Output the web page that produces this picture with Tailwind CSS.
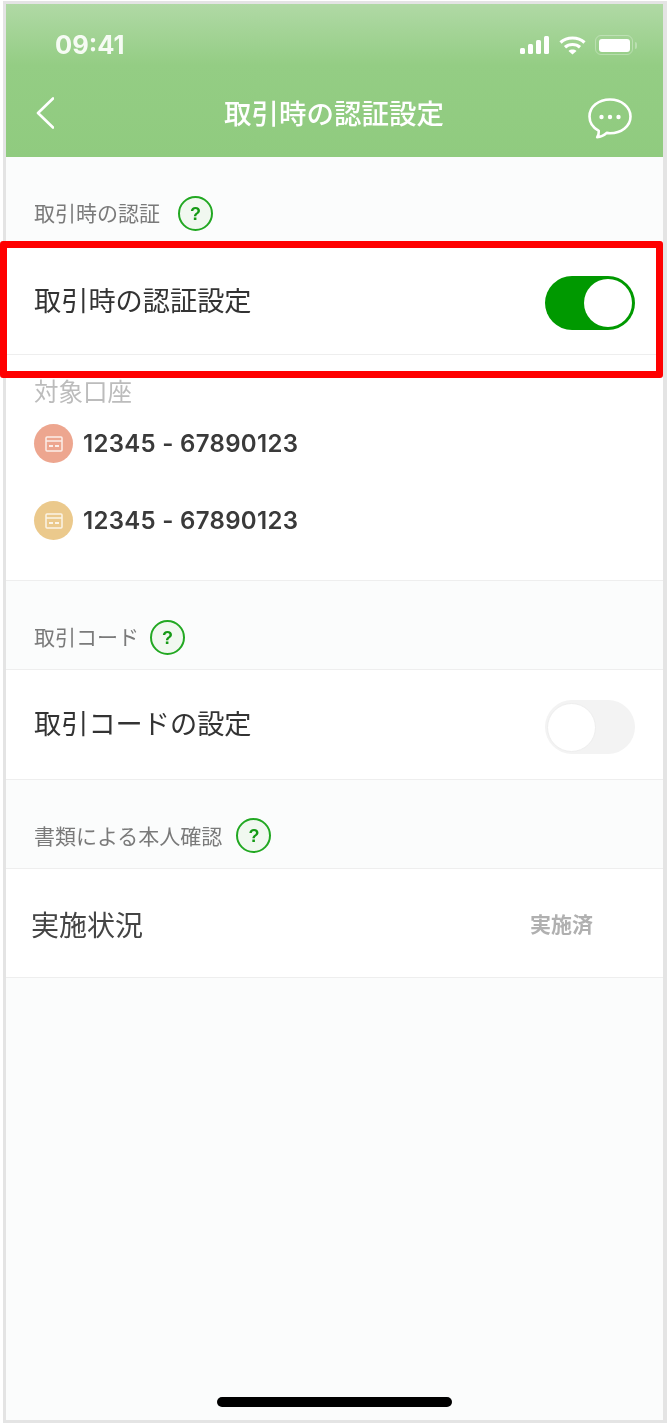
<!DOCTYPE html>
<html lang="ja">
<head>
  <meta charset="UTF-8">
  <meta name="viewport" content="width=device-width, initial-scale=1.0">
  <title>取引時の認証設定</title>
  <script src="https://cdn.jsdelivr.net/npm/@tailwindcss/browser@4"></script>
</head>
<body class="bg-white font-['Noto_Sans_CJK_JP','Noto_Sans',sans-serif]">
  <div class="relative w-[667px] h-[1424px] overflow-hidden">
    <!-- phone frame -->
    <div class="ml-[3px] mt-[1px] w-[664px] h-[1422px] border-[3px] border-r-[4px] border-[#e4e4e4] bg-[#fbfcfc] flex flex-col blur-[0.4px]">

      <!-- status bar + nav -->
      <header class="h-[153px] shrink-0 bg-gradient-to-b from-[#b0d9a5] via-[#94cd84] via-40% to-[#90cb7f] text-white">
        <div class="h-[63px] flex items-end pl-[49px] pr-[26px] pb-[5px] justify-between">
          <span class="font-['Inter',sans-serif] text-[25.500px] leading-[34px] font-bold text-[#f6fbf4]">09:41</span>
          <div class="flex items-center gap-[9px] h-[34px]">
            <svg width="30" height="18" viewBox="0 0 30 18" fill="#fff"><rect x="0" y="12" width="5" height="6" rx="1.5"/><rect x="8" y="8" width="5" height="10" rx="1.5"/><rect x="16" y="4" width="5" height="14" rx="1.5"/><rect x="24" y="0" width="5" height="18" rx="1.5"/></svg>
            <svg width="27" height="19" viewBox="0 0 27 19" fill="none" stroke="#fff" stroke-width="3.2"><path d="M1.5 6.5C8 .5 19 .5 25.5 6.5"/><path d="M6 11.2c4-3.6 11-3.6 15 0"/><path d="M13.5 18.5l-4-3.6c2.2-1.8 5.8-1.8 8 0z" fill="#fff" stroke="none"/></svg>
            <div class="flex items-center gap-[2px]">
              <div class="w-[38px] h-[20px] rounded-[6px] border-[1.5px] border-white/30 p-[2.5px]">
                <div class="w-full h-full rounded-[3px] bg-white"></div>
              </div>
              <div class="w-[2px] h-[7px] rounded-r-full bg-white/30"></div>
            </div>
          </div>
        </div>
        <div class="h-[90px] flex items-start justify-between pl-[30px] pr-[32px]">
          <div class="w-[44px]">
            <svg class="mt-[30px]" width="18" height="32" viewBox="0 0 18 32" fill="none" stroke="#fff" stroke-width="2.6" stroke-linecap="round" stroke-linejoin="round"><path d="M17 1.5L2 16l15 14.500"/></svg>
          </div>
          <h1 class="mt-[25px] text-[27.500px] leading-[40px] font-medium">取引時の認証設定</h1>
          <svg class="mt-[31px] -mr-[1px]" width="44" height="41" viewBox="0 0 44 41" fill="none"><path d="M22 1.500C10.500 1.500 1.500 8.800 1.500 18.500c0 6.200 3.600 11.300 9.300 14.400.1 2.200-.5 4.800-1.600 6.300 3.500-.2 7.300-2.200 9.500-4.300 1.200.2 2.300.3 3.300.3 11.500 0 20.500-7.200 20.500-16.700S33.500 1.500 22 1.500z" stroke="#fff" stroke-width="2.600" stroke-linejoin="round"/><circle cx="13.500" cy="19" r="2.200" fill="#fff"/><circle cx="22" cy="19" r="2.200" fill="#fff"/><circle cx="30.500" cy="19" r="2.200" fill="#fff"/></svg>
        </div>
      </header>

      <!-- 取引時の認証 -->
      <div class="h-[90px] shrink-0 flex items-start pl-[28px] pt-[39px] gap-[18px]">
        <span class="text-[21px] leading-[36px] -mt-[2px] text-[#7a7a7a]">取引時の認証</span>
        <span class="w-[35px] h-[35px] rounded-full border-2 border-[#22a822] bg-[#f1f8f0] flex items-center justify-center text-[#159a15] text-[18px] leading-none font-bold font-['Liberation_Sans',sans-serif]">?</span>
      </div>
      <div class="shrink-0 bg-white">
        <div class="h-[108px] flex items-center justify-between pl-[28px] pr-[28px] border-b border-[#eeeeee]">
          <span class="text-[27.200px] leading-[40px] -mt-[4px] text-[#333333]">取引時の認証設定</span>
          <div class="mt-[4px] w-[90px] h-[54px] rounded-full bg-[#009900] flex items-center justify-end pr-[3px]">
            <div class="w-[48px] h-[48px] rounded-full bg-white"></div>
          </div>
        </div>
        <div class="h-[226px] border-b border-[#eeeeee] pl-[28px] pt-[18px]">
          <div class="text-[24.500px] leading-[36px] text-[#bcbcbc]">対象口座</div>
          <div class="mt-[15px] flex items-center gap-[10px] h-[39px]">
            <div class="w-[39px] h-[39px] rounded-full bg-[#eda68f] flex items-center justify-center">
              <svg width="18" height="16" viewBox="0 0 18 16" fill="none" stroke="#fbeee9" stroke-width="1.500"><rect x="1" y="1" width="16" height="14" rx="1"/><path d="M1 5h16"/><path d="M4 10h4M10 10h4" stroke-width="2"/></svg>
            </div>
            <span class="font-['Inter',sans-serif] text-[24px] leading-[34px] tracking-[0.3px] font-semibold text-[#3a3a3a]">12345 - 67890123</span>
          </div>
          <div class="mt-[38px] flex items-center gap-[10px] h-[39px]">
            <div class="w-[39px] h-[39px] rounded-full bg-[#ebc98c] flex items-center justify-center">
              <svg width="18" height="16" viewBox="0 0 18 16" fill="none" stroke="#fbf4e6" stroke-width="1.500"><rect x="1" y="1" width="16" height="14" rx="1"/><path d="M1 5h16"/><path d="M4 10h4M10 10h4" stroke-width="2"/></svg>
            </div>
            <span class="font-['Inter',sans-serif] text-[24px] leading-[34px] tracking-[0.3px] font-semibold text-[#3a3a3a]">12345 - 67890123</span>
          </div>
        </div>
      </div>

      <!-- 取引コード -->
      <div class="h-[89px] shrink-0 flex items-start pl-[28px] pt-[39px] gap-[11px] border-b border-[#eeeeee]">
        <span class="text-[21px] leading-[36px] -mt-[2px] text-[#7a7a7a]">取引コード</span>
        <span class="w-[35px] h-[35px] rounded-full border-2 border-[#22a822] bg-[#f1f8f0] flex items-center justify-center text-[#159a15] text-[18px] leading-none font-bold font-['Liberation_Sans',sans-serif]">?</span>
      </div>
      <div class="h-[110px] shrink-0 bg-white flex items-center justify-between pl-[28px] pr-[28px] border-b border-[#eeeeee]">
        <span class="text-[27.200px] leading-[40px] -mt-[5px] text-[#333333]">取引コードの設定</span>
        <div class="mt-[5px] w-[90px] h-[54px] rounded-full bg-[#f3f3f3] flex items-center pl-[2px]">
          <div class="w-[49px] h-[49px] rounded-full bg-white border border-[#eeeeee]"></div>
        </div>
      </div>

      <!-- 書類による本人確認 -->
      <div class="h-[89px] shrink-0 flex items-start pl-[28px] pt-[38px] gap-[14px] border-b border-[#eeeeee]">
        <span class="text-[21px] leading-[36px] -mt-[1px] text-[#7a7a7a]">書類による本人確認</span>
        <span class="w-[35px] h-[35px] rounded-full border-2 border-[#22a822] bg-[#f1f8f0] flex items-center justify-center text-[#159a15] text-[18px] leading-none font-bold font-['Liberation_Sans',sans-serif]">?</span>
      </div>
      <div class="h-[109px] shrink-0 bg-white flex items-center justify-between pl-[25px] pr-[70px] border-b border-[#eeeeee]">
        <span class="text-[28px] leading-[40px] mt-[1px] text-[#444444]">実施状況</span>
        <span class="text-[21px] leading-[32px] font-bold text-[#b0b0b0]">実施済</span>
      </div>

      <!-- home indicator -->
      <div class="mt-auto mb-[13px] mx-auto w-[235px] h-[10px] rounded-full bg-black"></div>
    </div>

    <!-- red highlight over the first row -->
    <div class="absolute left-0 top-[241px] w-[663px] h-[137px] border-[7px] border-[#ff0000] rounded-[3px]"></div>
  </div>
</body>
</html>
